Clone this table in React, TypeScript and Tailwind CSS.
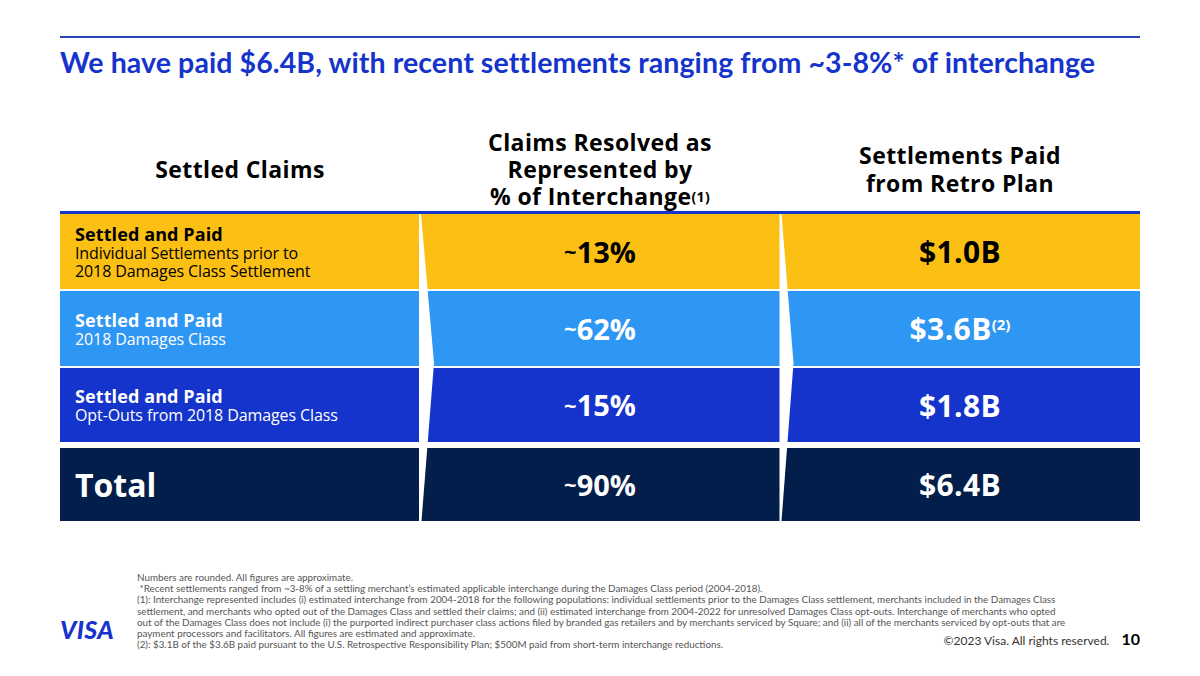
const rows = [
  {
    bg: "bg-[#fcc015]",
    text: "text-black",
    h: "h-[75px]",
    gap: "",
    title: "Settled and Paid",
    sub: ["Individual Settlements prior to", "2018 Damages Class Settlement"],
    pct: "13%",
    paid: "$1.0B",
    note: "",
  },
  {
    bg: "bg-[#2e96f3]",
    text: "text-white",
    h: "h-[75px]",
    gap: "mt-[2px]",
    title: "Settled and Paid",
    sub: ["2018 Damages Class"],
    pct: "62%",
    paid: "$3.6B",
    note: "(2)",
  },
  {
    bg: "bg-[#1434cb]",
    text: "text-white",
    h: "h-[74px]",
    gap: "mt-[2px]",
    title: "Settled and Paid",
    sub: ["Opt-Outs from 2018 Damages Class"],
    pct: "15%",
    paid: "$1.8B",
    note: "",
  },
];

const footnotes = [
  "Numbers are rounded. All figures are approximate.",
  "\u00a0*Recent settlements ranged from ~3-8% of a settling merchant\u2019s estimated applicable interchange during the Damages Class period (2004-2018).",
  "(1): Interchange represented includes (i) estimated interchange from 2004-2018 for the following populations: individual settlements prior to the Damages Class settlement, merchants included in the Damages Class",
  "settlement, and merchants who opted out of the Damages Class and settled their claims; and (ii) estimated interchange from 2004-2022 for unresolved Damages Class opt-outs. Interchange of merchants who opted",
  "out of the Damages Class does not include (i) the purported indirect purchaser class actions filed by branded gas retailers and by merchants serviced by Square; and (ii) all of the merchants serviced by opt-outs that are",
  "payment processors and facilitators. All figures are estimated and approximate.",
];

function Pct({ value }: { value: string }) {
  return (
    <div className="flex items-center justify-center text-[29px] font-bold">
      <span className="text-[22px]">~</span>
      {value}
    </div>
  );
}

export default function App() {
  return (
    <div className="relative h-[676px] w-[1200px] overflow-hidden bg-white px-[60px] pt-[36px] font-['Lato','Open_Sans',sans-serif]">
      {/* rule + title */}
      <div className="h-[2px] bg-[#2b44b5]" />
      <h1 className="mt-[8px] text-[28.5px] font-bold leading-[32px] tracking-[0.1px] text-[#1434cb]">
        We have paid $6.4B, with recent settlements ranging from ~3-8%* of interchange
      </h1>

      {/* column headers */}
      <div className="mt-[49px] grid h-[84px] grid-cols-3 font-['Open_Sans',sans-serif] text-[23px] font-bold tracking-[0.4px] text-black">
        <div className="flex items-center justify-center leading-[27px]">Settled Claims</div>
        <div className="flex flex-col items-center justify-center text-center leading-[27px]">
          <span>Claims Resolved as</span>
          <span>Represented by</span>
          <span>
            % of Interchange<sup className="relative top-[-3px] text-[14px]">(1)</sup>
          </span>
        </div>
        <div className="flex flex-col items-center justify-center text-center leading-[28px]">
          <span>Settlements Paid</span>
          <span>from Retro Plan</span>
        </div>
      </div>
      <div className="h-[3px] bg-[#1434cb]" />

      {/* table body */}
      <div className="relative font-['Open_Sans',sans-serif]">
        {rows.map((r) => (
          <div key={r.pct} className={`grid grid-cols-3 ${r.bg} ${r.text} ${r.h} ${r.gap}`}>
            <div className="flex flex-col justify-center pl-[15px]">
              <div className="text-[18px] font-bold leading-[20px] tracking-[0.1px]">{r.title}</div>
              {r.sub.map((s) => (
                <div key={s} className="text-[16px] leading-[18px] tracking-[-0.1px]">{s}</div>
              ))}
            </div>
            <Pct value={r.pct} />
            <div className="flex items-center justify-center text-[30px] font-bold tracking-[0.4px]">
              {r.paid}
              {r.note && <sup className="relative top-[-5px] text-[15px] tracking-normal">{r.note}</sup>}
            </div>
          </div>
        ))}
        <div className="mt-[6px] grid h-[73px] grid-cols-3 bg-[#031e4a] text-white">
          <div className="flex items-center pl-[15px] text-[32px] font-bold">Total</div>
          <Pct value="90%" />
          <div className="flex items-center justify-center text-[30px] font-bold tracking-[0.4px]">$6.4B</div>
        </div>

        {/* white chevron separators */}
        <svg className="absolute left-0 top-0 h-[307px] w-[1080px]" viewBox="0 0 1080 307">
          <polygon points="359,0 361,0 374,149 361.5,307 359,307" fill="white" />
          <polygon points="719.5,0 721.5,0 733.5,149 721.5,307 719.5,307" fill="white" />
        </svg>
      </div>

      {/* footer */}
      <div className="mt-[51px] flex">
        <div className="w-[77px] pt-[45px]">
          <span className="text-[25px] font-black italic leading-none tracking-[0.3px] text-[#1434cb]">VISA</span>
        </div>
        <div className="flex-1 text-[9.85px] leading-[11.2px] text-[#555]">
          {footnotes.map((f) => (
            <div key={f} className="whitespace-nowrap">{f}</div>
          ))}
          <div className="flex items-end justify-between">
            <span className="whitespace-nowrap">
              (2): $3.1B of the $3.6B paid pursuant to the U.S. Retrospective Responsibility Plan; $500M paid from short-term interchange reductions.
            </span>
            <span className="flex h-[11px] items-end">
              <span className="mb-[3px] flex items-baseline gap-[12px] leading-none">
                <span className="text-[12px] text-[#333]">©2023 Visa. All rights reserved.</span>
                <span className="text-[16px] font-bold text-black">10</span>
              </span>
            </span>
          </div>
        </div>
      </div>
    </div>
  );
}
